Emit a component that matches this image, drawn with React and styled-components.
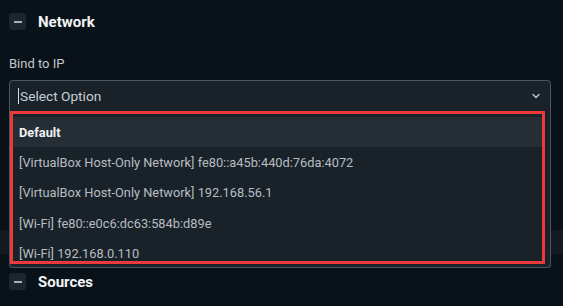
import React from "react";
import styled, { createGlobalStyle } from "styled-components";

const Global = createGlobalStyle`
  html, body { margin: 0; padding: 0; background: #0a1219; }
  body { font-family: Roboto, "Noto Sans", "Liberation Sans", sans-serif; width: 563px; height: 306px; overflow: hidden; }
`;

const Page = styled.div`
  display: flex;
  flex-direction: column;
  padding-top: 13px;
`;

const SectionHeader = styled.div`
  display: flex;
  align-items: center;
  gap: 12px;
  padding-left: 9px;
  height: 17px;
`;

const MinusButton = styled.div`
  width: 17px;
  height: 17px;
  border-radius: 3px;
  background: #1d252d;
  display: flex;
  align-items: center;
  justify-content: center;
  &::after {
    content: "";
    width: 8px;
    height: 2px;
    background: #a9b0b6;
  }
`;

const SectionTitle = styled.div`
  color: #f2f4f5;
  font-weight: 700;
  font-size: 15px;
`;

const Label = styled.div`
  color: #c3c8cc;
  font-size: 13px;
  padding-left: 9px;
  margin-top: 26px;
  height: 16px;
  line-height: 16px;
`;

const SelectWrap = styled.div`
  position: relative;
  margin: 8px 12px 0 9px;
`;

const Trigger = styled.div`
  height: 31px;
  box-sizing: border-box;
  border: 1px solid #4c5660;
  border-bottom: none;
  border-radius: 4px 4px 0 0;
  background: #1a2229;
  display: flex;
  align-items: center;
  padding: 0 9px 0 8px;
  color: #c9ced2;
  font-size: 13.7px;
`;

const Caret = styled.span`
  width: 1px;
  height: 16px;
  background: #d6dadd;
  margin-right: 1px;
`;

const TriggerText = styled.span`
  flex: 1;
`;

const Chevron = styled.svg`
  width: 10px;
  height: 10px;
`;

const Menu = styled.div`
  position: absolute;
  left: 0;
  right: 0;
  top: 100%;
  box-sizing: border-box;
  border: 1px solid #4c5660;
  border-top: none;
  border-radius: 0 0 4px 4px;
  background: #1a2229;
  padding: 0 5px 3px 0;
  z-index: 2;
`;

const Highlight = styled.div`
  border: 3px solid #ec3a3c;
  height: 153px;
  box-sizing: border-box;
  overflow: hidden;
  display: flex;
  flex-direction: column;
`;

const Option = styled.div`
  height: 30.4px;
  flex: none;
  display: flex;
  align-items: center;
  padding-left: 6px;
  font-size: 12.8px;
  color: ${(p) => (p.$active ? "#f1f3f4" : "#b7bdc2")};
  font-weight: ${(p) => (p.$active ? 700 : 400)};
  background: ${(p) => (p.$active ? "#262e35" : "transparent")};
  margin-top: ${(p) => (p.$first ? "3px" : "0")};
`;

const Hidden = styled.div`
  height: 162px;
  display: flex;
  flex-direction: column;
  justify-content: flex-end;
  padding-bottom: 19px;
  box-sizing: border-box;
`;

const GhostRow = styled.div`
  height: 24px;
  background: #131a21;
`;

const options = [
  "[VirtualBox Host-Only Network] fe80::a45b:440d:76da:4072",
  "[VirtualBox Host-Only Network] 192.168.56.1",
  "[Wi-Fi] fe80::e0c6:dc63:584b:d89e",
  "[Wi-Fi] 192.168.0.110",
];

export default function App() {
  return (
    <>
      <Global />
      <Page>
        <SectionHeader>
          <MinusButton />
          <SectionTitle>Network</SectionTitle>
        </SectionHeader>
        <Label>Bind to IP</Label>
        <SelectWrap>
          <Trigger>
            <Caret />
            <TriggerText>Select Option</TriggerText>
            <Chevron viewBox="0 0 10 10">
              <path d="M2 3.5 L5 6.5 L8 3.5" fill="none" stroke="#b4bbc1" strokeWidth="1.6" strokeLinecap="round" strokeLinejoin="round" />
            </Chevron>
          </Trigger>
          <Menu>
            <Highlight>
              <Option $active $first>Default</Option>
              {options.map((o) => (
                <Option key={o}>{o}</Option>
              ))}
            </Highlight>
          </Menu>
        </SelectWrap>
        <Hidden>
          <GhostRow />
        </Hidden>
        <SectionHeader>
          <MinusButton />
          <SectionTitle>Sources</SectionTitle>
        </SectionHeader>
      </Page>
    </>
  );
}
